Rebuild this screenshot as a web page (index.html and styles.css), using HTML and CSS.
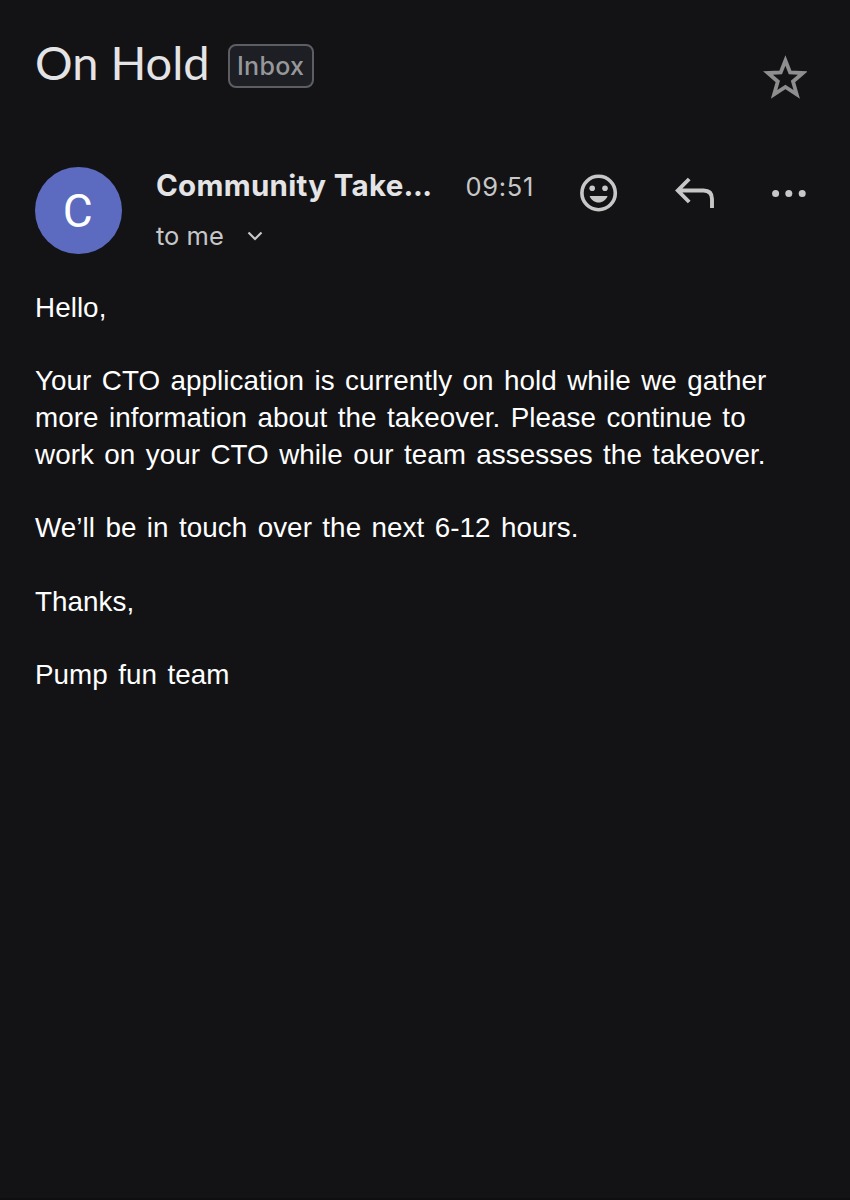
FILE: index.html
```html
<html lang="en">
<head>
    <meta charset="UTF-8">
    <meta name="viewport" content="width=device-width, initial-scale=1.0">
    <title>On Hold</title>
    <link rel="stylesheet" href="styles.css">
</head>
<body>
    <header class="subject-bar">
        <h1 class="subject">On Hold</h1>
        <span class="label">Inbox</span>
        <svg class="star" width="44" height="44" viewBox="0 0 44 44">
            <path d="M22.4 5.5 L27.1 17.5 L39.9 18 L30 26.5 L33.7 39.3 L22.4 32 L11.1 39.3 L14.8 26.5 L4.9 18 L17.7 17.5 Z" fill="none" stroke="#8e8e8f" stroke-width="3.8"/>
        </svg>
    </header>
    <section class="message-header">
        <div class="avatar">C</div>
        <div class="sender-info">
            <div class="sender-row">
                <span class="sender">Community Take<span class="dots">...</span></span>
                <span class="time">09:51</span>
            </div>
            <div class="recipient">
                <span>to me</span>
                <svg width="16" height="10" viewBox="0 0 16 10">
                    <path d="M1.5 1.5 L8 8 L14.5 1.5" fill="none" stroke="#c7c7c8" stroke-width="2.2"/>
                </svg>
            </div>
        </div>
        <div class="actions">
            <svg width="38" height="38" viewBox="0 0 38 38">
                <circle cx="18.6" cy="19" r="16.7" fill="none" stroke="#c7c7c8" stroke-width="3.6"/>
                <circle cx="12.2" cy="14.3" r="2.8" fill="#c7c7c8"/>
                <circle cx="25" cy="14.3" r="2.8" fill="#c7c7c8"/>
                <path d="M9.6 22 H27.6 C26 26 22.6 28.5 18.6 28.5 C14.6 28.5 11 26 9.6 22 Z" fill="#c7c7c8"/>
            </svg>
            <svg width="40" height="32" viewBox="0 0 40 32">
                <path d="M14.2 2 L2.8 13.5 L14.2 25 M3 13.5 H28.5 Q37 13.5 37 22 V31" fill="none" stroke="#c7c7c8" stroke-width="3.9"/>
            </svg>
            <svg width="34" height="8" viewBox="0 0 34 8">
                <circle cx="3.6" cy="4.4" r="3.5" fill="#c7c7c8"/>
                <circle cx="16.8" cy="4.4" r="3.5" fill="#c7c7c8"/>
                <circle cx="30.2" cy="4.4" r="3.5" fill="#c7c7c8"/>
            </svg>
        </div>
    </section>
    <main class="message">
        <p>Hello,</p>
        <p>Your CTO application is currently on hold while we gather<br>more information about the takeover. Please continue to<br>work on your CTO while our team assesses the takeover.</p>
        <p>We’ll be in touch over the next 6-12 hours.</p>
        <p>Thanks,</p>
        <p>Pump fun team</p>
    </main>
</body>
</html>
```

FILE: styles.css
```css
body {
    font-family: Inter, sans-serif;
    margin: 0;
    box-sizing: border-box;
    height: 1200px;
    padding: 33px 35px 0;
    border-bottom: 2px solid #0f0d10;
    background-color: #131315;
    color: #e4e4e6;
}
.subject-bar {
    display: flex;
    align-items: flex-start;
    height: 134px;
}
.subject {
    margin: 0;
    font-family: Lato, sans-serif;
    font-size: 47px;
    font-weight: 400;
    line-height: 58px;
    white-space: nowrap;
}
.label {
    box-sizing: border-box;
    width: 86px;
    height: 44px;
    margin: 11px 0 0 18px;
    border: 2px solid #5d5e63;
    border-radius: 8px;
    background-color: #1e1f24;
    color: #97989b;
    font-size: 25px;
    font-weight: 500;
    letter-spacing: 0.3px;
    line-height: 41px;
    text-align: center;
}
.star {
    margin: 22px 8px 0 auto;
}
.message-header {
    display: flex;
    align-items: flex-start;
    height: 122.5px;
}
.avatar {
    width: 86.5px;
    height: 87px;
    border-radius: 50%;
    background-color: #5c6bc0;
    color: #fff;
    font-family: Roboto, sans-serif;
    font-size: 46px;
    line-height: 89px;
    text-align: center;
    text-indent: -1px;
}
.sender-info {
    width: 378px;
    margin-left: 34.5px;
    white-space: nowrap;
}
.sender-row {
    display: flex;
    align-items: baseline;
    justify-content: space-between;
    height: 38px;
    line-height: 36px;
}
.sender {
    font-size: 29.5px;
    font-weight: 700;
    letter-spacing: 0.3px;
}
.dots {
    letter-spacing: -0.5px;
}
.time {
    color: #c7c7c8;
    font-size: 25.5px;
    letter-spacing: 0.7px;
}
.recipient {
    display: flex;
    align-items: center;
    gap: 23px;
    margin-top: 12px;
    color: #c7c7c8;
    font-size: 25.5px;
    line-height: 38px;
}
.actions {
    display: flex;
    align-items: center;
    justify-content: space-between;
    width: 226px;
    height: 52px;
    margin-left: 46px;
}
.message {
    color: #fff;
    font-family: "Liberation Sans", Arial, sans-serif;
    font-size: 27.8px;
    line-height: 36.8px;
    letter-spacing: 0.06px;
    word-spacing: 2.6px;
    white-space: nowrap;
}
.message p {
    margin: 0 0 36.8px;
}
```
